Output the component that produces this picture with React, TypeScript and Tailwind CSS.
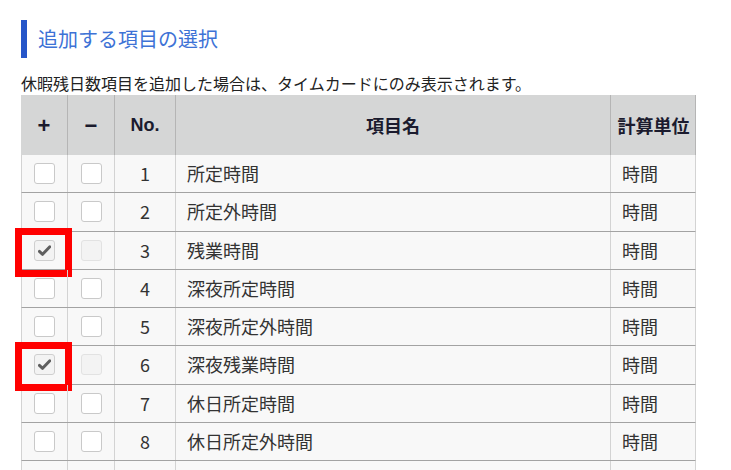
import React from "react";

const rows = [
  { no: 1, name: "所定時間", plus: false, minusDisabled: false },
  { no: 2, name: "所定外時間", plus: false, minusDisabled: false },
  { no: 3, name: "残業時間", plus: true, minusDisabled: true },
  { no: 4, name: "深夜所定時間", plus: false, minusDisabled: false },
  { no: 5, name: "深夜所定外時間", plus: false, minusDisabled: false },
  { no: 6, name: "深夜残業時間", plus: true, minusDisabled: true },
  { no: 7, name: "休日所定時間", plus: false, minusDisabled: false },
  { no: 8, name: "休日所定外時間", plus: false, minusDisabled: false },
];

function Box({ checked, disabled }: { checked?: boolean; disabled?: boolean }) {
  if (checked) {
    return (
      <div className="w-[21px] h-[21px] rounded-[3px] border border-[#cfcfcf] bg-[#f3f3f3] flex items-center justify-center">
        <svg width="13" height="11" viewBox="0 0 13 11">
          <path d="M1.4 6.4 L4.6 9.3 L11.8 1.8" fill="none" stroke="#5f5f5f" strokeWidth="3" strokeLinecap="round" strokeLinejoin="round" />
        </svg>
      </div>
    );
  }
  if (disabled) {
    return <div className="w-[21px] h-[21px] rounded-[3px] border border-[#e2e2e2] bg-[#f3f3f3]" />;
  }
  return <div className="w-[21px] h-[21px] rounded-[3px] border border-[#c9c9c9] bg-white" />;
}

const rowCls =
  "grid grid-cols-[46px_47px_61px_435px_85px] h-[38.25px] bg-[#f8f8f8] border-b border-[#a3a3a3] border-l border-r border-l-[#d3d3d3] border-r-[#d3d3d3] text-[18px] text-[#333]";

export default function App() {
  return (
    <div
      className="w-[731px] h-[470px] overflow-hidden bg-white pl-[21px] pt-[20px] text-[#333]"
      style={{ fontFamily: '"Noto Sans CJK JP", "Noto Sans", sans-serif' }}
    >
      <div className="flex items-center h-[38px]">
        <div className="w-[6px] h-[38px] bg-[#2656c9]" />
        <div className="ml-[11px] text-[20px] leading-none text-[#3d72d6]">追加する項目の選択</div>
      </div>
      <div className="mt-[15px] text-[16px] leading-[20px] text-[#222]">
        休暇残日数項目を追加した場合は、タイムカードにのみ表示されます。
      </div>
      <div className="w-[675px] mt-[2px]">
        <div className="grid grid-cols-[47px_47px_61px_435px_85px] h-[60px] bg-[#d5d6d6] text-[#1b1b2e] font-bold text-[18px] border-r border-[#b5b5b5]">
          <div className="flex items-center justify-center border-r border-[#b5b5b5] text-[22px]" style={{ fontFamily: '"Liberation Sans", sans-serif' }}>+</div>
          <div className="flex items-center justify-center border-r border-[#b5b5b5] text-[22px]" style={{ fontFamily: '"Liberation Sans", sans-serif' }}>−</div>
          <div className="flex items-center justify-center border-r border-[#b5b5b5]" style={{ fontFamily: '"Liberation Sans", sans-serif' }}>No.</div>
          <div className="flex items-center justify-center border-r border-[#b5b5b5]">項目名</div>
          <div className="flex items-center justify-center">計算単位</div>
        </div>
        {rows.map((r) => (
          <div key={r.no} className={rowCls}>
            <div className="relative flex items-center justify-center border-r border-[#d3d3d3]">
              <Box checked={r.plus} />
              {r.plus && (
                <div className="absolute left-[-7px] top-[-4px] w-[57px] h-[49px] border-[7px] border-[#ff0000]" />
              )}
            </div>
            <div className="flex items-center justify-center border-r border-[#d3d3d3]">
              <Box disabled={r.minusDisabled} />
            </div>
            <div className="flex items-center justify-center border-r border-[#d3d3d3]">{r.no}</div>
            <div className="flex items-center pl-[11px] border-r border-[#d3d3d3]">{r.name}</div>
            <div className="flex items-center pl-[11px]">時間</div>
          </div>
        ))}
        <div className={rowCls}>
          <div className="border-r border-[#d3d3d3]" />
          <div className="border-r border-[#d3d3d3]" />
          <div className="border-r border-[#d3d3d3]" />
          <div className="border-r border-[#d3d3d3]" />
          <div />
        </div>
      </div>
    </div>
  );
}
